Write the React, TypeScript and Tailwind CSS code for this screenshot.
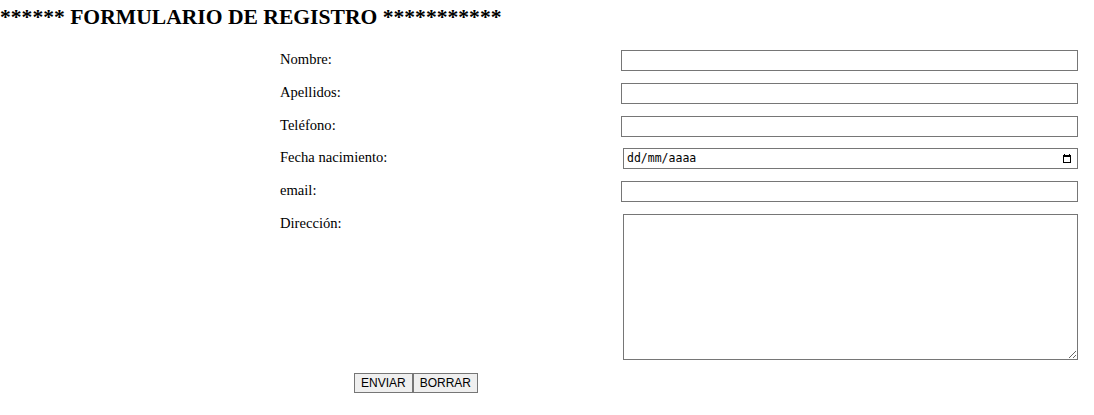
const fields = ["Nombre:", "Apellidos:", "Teléfono:"];

function CalendarIcon() {
  return (
    <svg width="8" height="9" viewBox="0 0 8 9" className="shrink-0">
      <rect x="0.5" y="1.5" width="7" height="7" fill="none" stroke="#000" />
      <rect x="0" y="1" width="8" height="2" fill="#000" />
      <rect x="1" y="0" width="1" height="1" fill="#000" />
      <rect x="6" y="0" width="1" height="1" fill="#000" />
    </svg>
  );
}

function Row({ label, className, children }: { label: string; className: string; children: React.ReactNode }) {
  return (
    <div className={`flex items-start ${className}`}>
      <div className="w-[621px] shrink-0 pl-[280px] whitespace-nowrap text-[14.6px] leading-[18px]">{label}</div>
      {children}
    </div>
  );
}

export default function App() {
  return (
    <div className="h-[415px] w-[1094px] bg-white text-black font-['Liberation_Serif',serif]">
      <h2 className="pt-[3px] text-[21.6px] font-bold leading-[28px]">
        ****** FORMULARIO DE REGISTRO ***********
      </h2>
      <form className="mt-[19px]">
        {fields.map((f, i) => (
          <Row key={f} label={f} className={i === 0 ? "" : "mt-[12px]"}>
            <input type="text" className="h-[21px] w-[457px] border border-[#767676] px-[2px]" />
          </Row>
        ))}
        <Row label="Fecha nacimiento:" className="mt-[11px]">
          <div className="ml-[2px] flex h-[21px] w-[455px] items-center justify-between border border-[#767676] pl-[3px] pr-[6px] font-['DejaVu_Sans_Mono',monospace] text-[11.5px]">
            <span>dd/mm/aaaa</span>
            <CalendarIcon />
          </div>
        </Row>
        <Row label="email:" className="mt-[12px]">
          <input type="text" className="h-[21px] w-[457px] border border-[#767676] px-[2px]" />
        </Row>
        <Row label="Dirección:" className="mt-[12px]">
          <textarea className="ml-[2px] block h-[146px] w-[455px] border border-[#767676]" />
        </Row>
        <div className="mt-[13px] flex pl-[354px] font-['Liberation_Sans',sans-serif] text-[12px]">
          <button type="button" className="h-[20px] border border-[#767676] bg-[#efefef] px-[6px] leading-[16px]">
            ENVIAR
          </button>
          <button type="button" className="h-[20px] border border-[#767676] bg-[#efefef] px-[6px] leading-[16px]">
            BORRAR
          </button>
        </div>
      </form>
    </div>
  );
}
